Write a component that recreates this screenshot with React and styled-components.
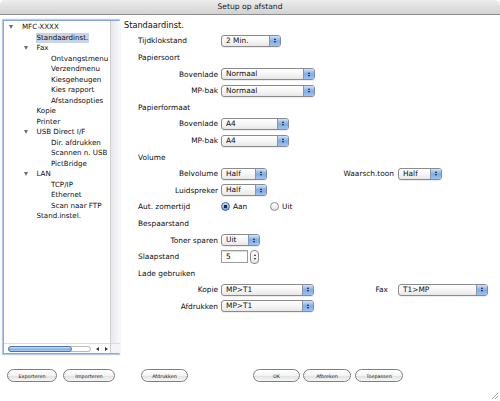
import React from "react"
import styled, { createGlobalStyle } from "styled-components"

const GlobalStyle = createGlobalStyle`
html, body {
  margin: 0;
  padding: 0;
  background: #fff;
}
body {
  font-family: "DejaVu Sans", "Liberation Sans", sans-serif;
  color: #0e0e0e;
}
`

const Window = styled.div`
position: relative;
width: 500px;
height: 401px;
display: flex;
flex-direction: column;
background: #fff;
overflow: hidden;
`

const TitleBar = styled.div`
height: 14px;
border-bottom: 1px solid #8f8f8f;
border-radius: 5px 5px 0 0;
background: linear-gradient(#ededed, #d2d2d2);
font-size: 7.6px;
line-height: 14px;
text-align: center;
color: #1c1c1c;
`

const Body = styled.div`
display: flex;
padding: 5px 0 0 3px;
`

const TreePanel = styled.div`
width: 116px;
height: 334px;
box-sizing: border-box;
border: 1px solid #84a9d8;
box-shadow: 0 0 1px 1px #b4cbe9;
display: grid;
grid-template-columns: 1fr 10px;
grid-template-rows: 1fr 10px;
`

const TreeList = styled.div`
padding-top: 1px;
overflow: hidden;
`

const TreeRow = styled.div`
height: 10.5px;
display: flex;
align-items: center;
padding-left: ${p => 5 + p.level * 14.5}px;
font-size: 7.1px;
white-space: nowrap;
`

const Toggle = styled.span`
width: 13px;
flex-shrink: 0;
display: flex;
align-items: center;
`

const Disclosure = styled.i`
width: 0;
height: 0;
border-left: 2.5px solid transparent;
border-right: 2.5px solid transparent;
border-top: 4px solid #6e6e6e;
`

const TreeText = styled.span`
padding: 0 1px;
margin-left: -1px;
line-height: 10px;
background: ${p => (p.selected ? "#c9d5e7" : "transparent")};
`

const VTrack = styled.div`
border-left: 1px solid #cfcfcf;
background: linear-gradient(90deg, #e8e8e8, #f9f9f9);
`

const HScroll = styled.div`
display: flex;
align-items: center;
padding-left: 4px;
border-top: 1px solid #dcdcdc;
`

const HTrack = styled.div`
width: 83px;
height: 6px;
box-sizing: border-box;
border: 1px solid #b9b9b9;
border-radius: 4px;
display: flex;
align-items: center;
`

const HThumb = styled.div`
width: 64px;
height: 6px;
margin-left: -1px;
box-sizing: border-box;
border: 1px solid #4b76b2;
border-radius: 4px;
background: linear-gradient(#d2e3f8, #86afe4 55%, #a9c8ef);
`

const ArrowBtn = styled.span`
width: 8px;
height: 8px;
display: flex;
align-items: center;
justify-content: center;
margin-left: ${p => p.ml || 0}px;
&::before {
  content: "";
  width: 0;
  height: 0;
  border-top: 2px solid transparent;
  border-bottom: 2px solid transparent;
  ${p => (p.dir === "left" ? "border-right: 3px solid #333;" : "border-left: 3px solid #333;")}
}
`

const Corner = styled.div`
background: #f4f4f4;
border-left: 1px solid #cfcfcf;
border-top: 1px solid #dcdcdc;
`

const Form = styled.div`
margin-left: 5px;
display: flex;
flex-direction: column;
flex: 1;
`

const Heading = styled.div`
height: 12.7px;
font-size: 8.2px;
line-height: 10px;
`

const Row = styled.div`
height: 16.6px;
display: flex;
align-items: center;
font-size: 7.4px;
white-space: nowrap;
`

const Section = styled.span`
padding-left: 14px;
`

const Group = styled.div`
width: 274px;
display: flex;
align-items: center;
flex-shrink: 0;
`

const Label = styled.span`
width: 80px;
margin-left: 14px;
margin-right: 3px;
flex-shrink: 0;
text-align: ${p => (p.left ? "left" : "right")};
`

const SideLabel = styled.span`
margin-left: auto;
margin-right: ${p => p.gap}px;
`

const Popup = styled.div`
width: ${p => p.w}px;
height: 12px;
box-sizing: border-box;
flex-shrink: 0;
border: 1px solid #8b8b8b;
border-radius: 3px;
background: linear-gradient(#ffffff, #f6f6f6 50%, #e7e7e7);
box-shadow: 0 1px 0 rgba(0, 0, 0, 0.07);
display: flex;
overflow: hidden;
`

const PopupText = styled.span`
flex: 1;
padding-left: 4px;
font-size: 7.4px;
line-height: 10px;
`

const PopupArrows = styled.span`
width: 10px;
border-left: 1px solid #7e97ba;
background: linear-gradient(#d0e2fa, #7eace9 50%, #9cc2f2);
display: flex;
flex-direction: column;
align-items: center;
justify-content: center;
gap: 1px;
`

const Tri = styled.i`
width: 0;
height: 0;
border-left: 1.5px solid transparent;
border-right: 1.5px solid transparent;
${p => (p.up ? "border-bottom: 2px solid #1d1d1d;" : "border-top: 2px solid #1d1d1d;")}
`

const RadioOption = styled.label`
width: ${p => p.w || "auto"};
display: flex;
align-items: center;
gap: 3px;
flex-shrink: 0;
`

const RadioCircle = styled.span`
width: 9px;
height: 9px;
box-sizing: border-box;
border-radius: 50%;
border: 1px solid ${p => (p.on ? "#3b67a3" : "#8c8c8c")};
background: ${p =>
  p.on
    ? "radial-gradient(circle, #1a2a44 0 1.5px, transparent 2px), linear-gradient(#c9def8, #6c9ddf)"
    : "linear-gradient(#ffffff, #e2e2e2)"};
`

const NumberField = styled.div`
width: 27px;
height: 13px;
box-sizing: border-box;
border: 1px solid #9c9c9c;
box-shadow: inset 0 1px 1px rgba(0, 0, 0, 0.15);
padding-left: 4px;
font-size: 7.4px;
line-height: 11px;
`

const Stepper = styled.div`
width: 9px;
height: 14px;
box-sizing: border-box;
margin-left: 2px;
border: 1px solid #8a8a8a;
border-radius: 4px;
background: linear-gradient(#ffffff, #e8e8e8);
display: flex;
flex-direction: column;
align-items: center;
justify-content: center;
gap: 2px;
`

const Footer = styled.div`
display: flex;
align-items: center;
padding-top: 15px;
`

const PushButton = styled.button`
width: ${p => p.w}px;
height: 13px;
margin-left: ${p => p.ml}px;
padding: 0;
box-sizing: border-box;
border: 1px solid #7e7e7e;
border-radius: 7px;
background: linear-gradient(#ffffff, #f3f3f3 50%, #e2e2e2 55%, #f6f6f6);
font-family: inherit;
font-size: 4.9px;
color: #222;
`

const Grip = styled.svg`
position: absolute;
right: 1px;
bottom: 1px;
`

const tree = [
  { level: 0, text: "MFC-XXXX", open: true },
  { level: 1, text: "Standaardinst.", selected: true },
  { level: 1, text: "Fax", open: true },
  { level: 2, text: "Ontvangstmenu" },
  { level: 2, text: "Verzendmenu" },
  { level: 2, text: "Kiesgeheugen" },
  { level: 2, text: "Kies rapport" },
  { level: 2, text: "Afstandsopties" },
  { level: 1, text: "Kopie" },
  { level: 1, text: "Printer" },
  { level: 1, text: "USB Direct I/F", open: true },
  { level: 2, text: "Dir. afdrukken" },
  { level: 2, text: "Scannen n. USB" },
  { level: 2, text: "PictBridge" },
  { level: 1, text: "LAN", open: true },
  { level: 2, text: "TCP/IP" },
  { level: 2, text: "Ethernet" },
  { level: 2, text: "Scan naar FTP" },
  { level: 1, text: "Stand.instel." },
]

function Select({ w, value }) {
  return (
    <Popup w={w}>
      <PopupText>{value}</PopupText>
      <PopupArrows>
        <Tri up />
        <Tri />
      </PopupArrows>
    </Popup>
  )
}

function App() {
  return (
    <Window>
      <GlobalStyle />
      <TitleBar>Setup op afstand</TitleBar>
      <Body>
        <TreePanel>
          <TreeList>
            {tree.map((item, i) => (
              <TreeRow key={i} level={item.level}>
                <Toggle>{item.open && <Disclosure />}</Toggle>
                <TreeText selected={item.selected}>{item.text}</TreeText>
              </TreeRow>
            ))}
          </TreeList>
          <VTrack />
          <HScroll>
            <HTrack>
              <HThumb />
            </HTrack>
            <ArrowBtn dir="left" ml={2} />
            <ArrowBtn dir="right" ml={1} />
          </HScroll>
          <Corner />
        </TreePanel>

        <Form>
          <Heading>Standaardinst.</Heading>
          <Row>
            <Label left>Tijdklokstand</Label>
            <Select w={60} value="2 Min." />
          </Row>
          <Row><Section>Papiersoort</Section></Row>
          <Row>
            <Label>Bovenlade</Label>
            <Select w={94} value="Normaal" />
          </Row>
          <Row>
            <Label>MP-bak</Label>
            <Select w={94} value="Normaal" />
          </Row>
          <Row><Section>Papierformaat</Section></Row>
          <Row>
            <Label>Bovenlade</Label>
            <Select w={68} value="A4" />
          </Row>
          <Row>
            <Label>MP-bak</Label>
            <Select w={68} value="A4" />
          </Row>
          <Row><Section>Volume</Section></Row>
          <Row>
            <Group>
              <Label>Belvolume</Label>
              <Select w={46} value="Half" />
              <SideLabel gap={4}>Waarsch.toon</SideLabel>
            </Group>
            <Select w={44} value="Half" />
          </Row>
          <Row>
            <Label>Luidspreker</Label>
            <Select w={46} value="Half" />
          </Row>
          <Row>
            <Label left>Aut. zomertijd</Label>
            <RadioOption w="49px">
              <RadioCircle on />
              Aan
            </RadioOption>
            <RadioOption>
              <RadioCircle />
              Uit
            </RadioOption>
          </Row>
          <Row><Section>Bespaarstand</Section></Row>
          <Row>
            <Label>Toner sparen</Label>
            <Select w={39} value="Uit" />
          </Row>
          <Row>
            <Label left>Slaapstand</Label>
            <NumberField>5</NumberField>
            <Stepper>
              <Tri up />
              <Tri />
            </Stepper>
          </Row>
          <Row><Section>Lade gebruiken</Section></Row>
          <Row>
            <Group>
              <Label>Kopie</Label>
              <Select w={93} value="MP>T1" />
              <SideLabel gap={10}>Fax</SideLabel>
            </Group>
            <Select w={90} value="T1>MP" />
          </Row>
          <Row>
            <Label>Afdrukken</Label>
            <Select w={93} value="MP>T1" />
          </Row>
        </Form>
      </Body>

      <Footer>
        <PushButton w={50} ml={7}>Exporteren</PushButton>
        <PushButton w={52} ml={6}>Importeren</PushButton>
        <PushButton w={47} ml={26}>Afdrukken</PushButton>
        <PushButton w={47} ml={65}>OK</PushButton>
        <PushButton w={48} ml={3}>Afbreken</PushButton>
        <PushButton w={48} ml={4}>Toepassen</PushButton>
      </Footer>

      <Grip width="8" height="8" viewBox="0 0 8 8">
        <path d="M7 1L1 7M7 4L4 7M7 6.5L6.5 7" stroke="#8a8a8a" strokeWidth="0.8" />
      </Grip>
    </Window>
  )
}

export default App
